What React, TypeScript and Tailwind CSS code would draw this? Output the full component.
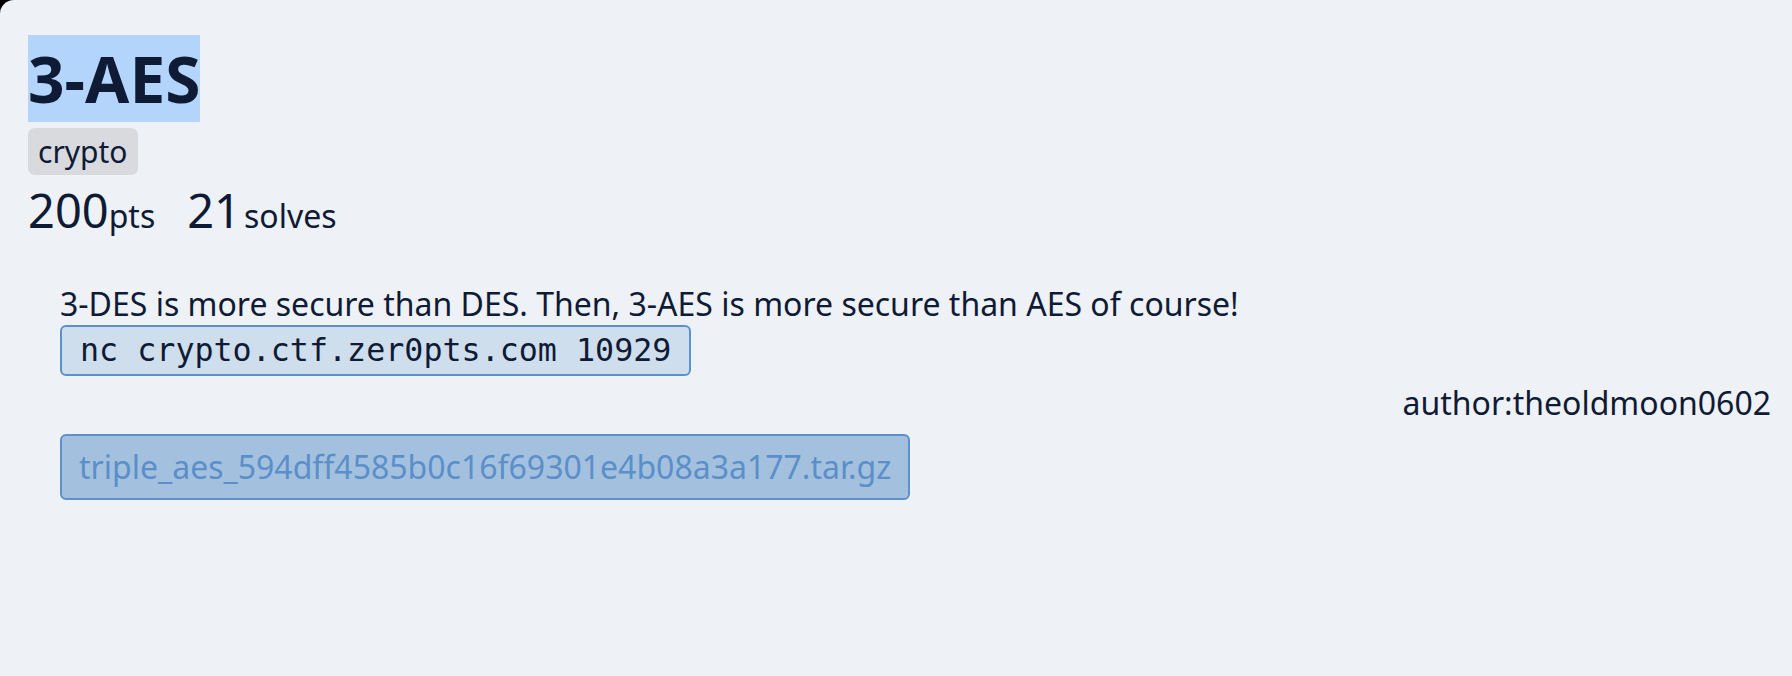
import React from "react";

export default function App() {
  return (
    <div className="w-[1792px] h-[676px] bg-black overflow-hidden">
      <div
        className="w-full h-full bg-[#eef1f6] rounded-tl-[14px] pl-[28px] pr-[21px] pt-[36px] text-[#0f1b35]"
        style={{ fontFamily: '"Noto Sans", "Open Sans", sans-serif' }}
      >
        <h1 className="text-[64px] font-bold leading-[85px] m-0">
          <span className="bg-[#b3d4fb]">3-AES</span>
        </h1>
        <div className="mt-[7px] flex">
          <span className="bg-[#d8dade] rounded-[7px] px-[10px] h-[47px] flex items-center text-[30px] leading-none">
            crypto
          </span>
        </div>
        <div className="mt-[12px] flex items-baseline leading-none">
          <span className="text-[47px]">200</span>
          <span className="text-[32px]">pts</span>
          <span className="text-[47px] ml-[32px]">21</span>
          <span className="text-[32px] ml-[3px]">solves</span>
        </div>
        <div className="mt-[48px] pl-[32px]">
          <p className="text-[32px] leading-[43px] m-0">
            3-DES is more secure than DES. Then, 3-AES is more secure than AES of course!
          </p>
          <div className="flex">
            <code
              className="bg-[#cfdeed] border-2 border-[#5d91c9] rounded-[6px] px-[18px] h-[51px] flex items-center text-[31.7px]"
              style={{ fontFamily: '"DejaVu Sans Mono", monospace' }}
            >
              nc crypto.ctf.zer0pts.com 10929
            </code>
          </div>
          <div className="text-right text-[32px] leading-[43px] mt-[5px]">
            author:theoldmoon0602
          </div>
          <div className="flex mt-[10px]">
            <a className="bg-[#a3c1de] border-2 border-[#5d91c9] rounded-[6px] px-[17px] h-[66px] flex items-center text-[32px] text-[#5b8fca]">
              triple_aes_594dff4585b0c16f69301e4b08a3a177.tar.gz
            </a>
          </div>
        </div>
      </div>
    </div>
  );
}
